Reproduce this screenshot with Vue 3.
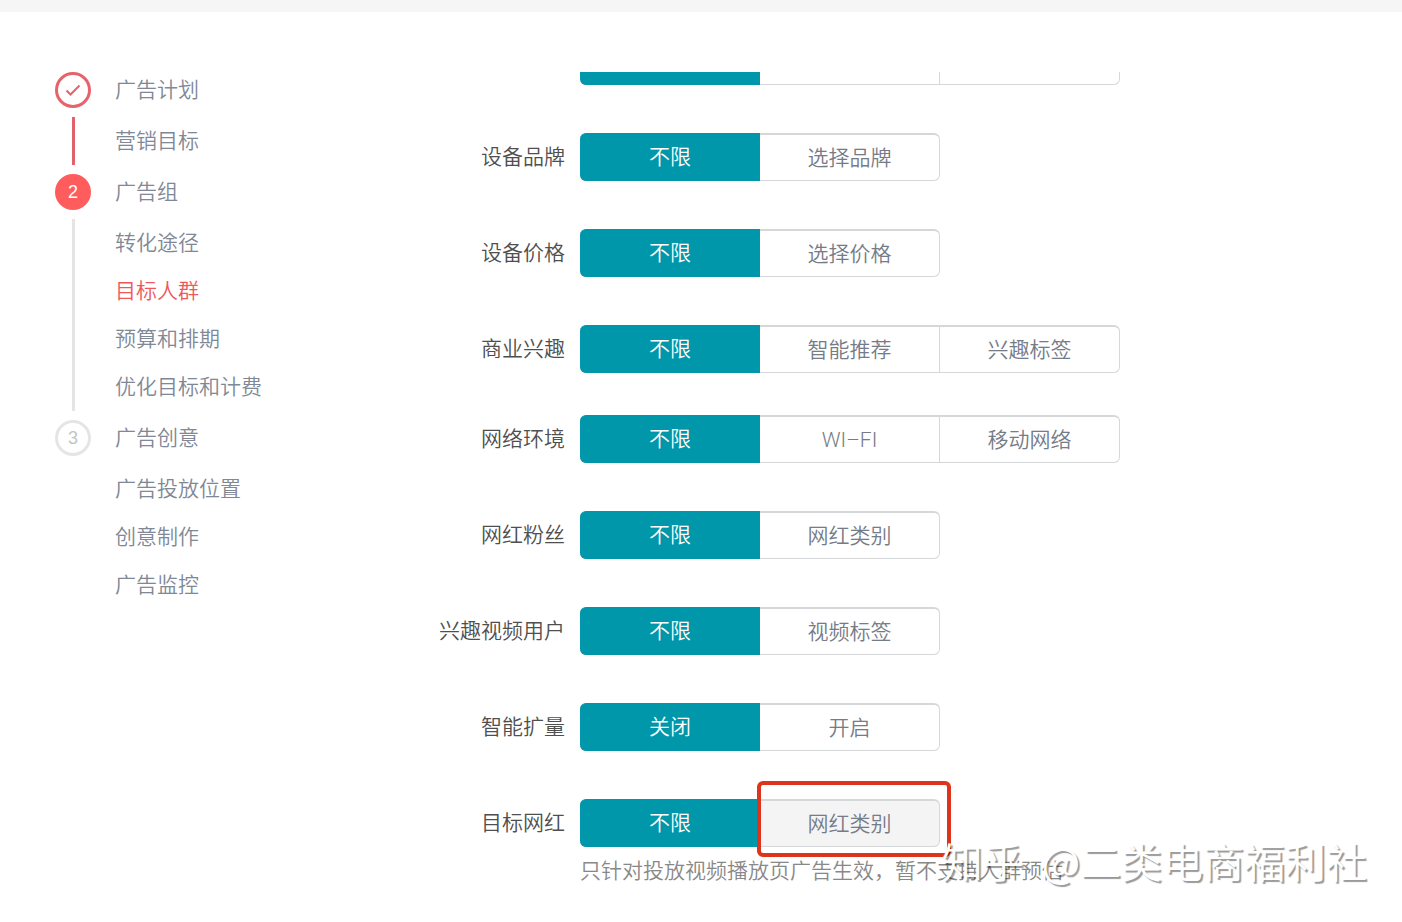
<script setup>
import { ref } from 'vue'

const steps = [
  { mark: 'done', title: '广告计划', items: ['营销目标'] },
  { mark: 'current', number: 2, title: '广告组', items: ['转化途径', '目标人群', '预算和排期', '优化目标和计费'] },
  { mark: 'todo', number: 3, title: '广告创意', items: ['广告投放位置', '创意制作', '广告监控'] }
]
const activeItem = '目标人群'

const rows = ref([
  { label: '设备品牌', options: ['不限', '选择品牌'], value: 0 },
  { label: '设备价格', options: ['不限', '选择价格'], value: 0 },
  { label: '商业兴趣', options: ['不限', '智能推荐', '兴趣标签'], value: 0, tight: true },
  { label: '网络环境', options: ['不限', 'WI–FI', '移动网络'], value: 0 },
  { label: '网红粉丝', options: ['不限', '网红类别'], value: 0 },
  { label: '兴趣视频用户', options: ['不限', '视频标签'], value: 0 },
  { label: '智能扩量', options: ['关闭', '开启'], value: 0 },
  {
    label: '目标网红',
    options: ['不限', '网红类别'],
    value: 0,
    marked: 1,
    hint: '只针对投放视频播放页广告生效，暂不支持人群预估'
  }
])
</script>

<template>
  <div class="page">
    <div class="topbar"></div>
    <div class="layout">
      <nav class="steps">
        <section v-for="step in steps" :key="step.title" :class="['step', step.mark]">
          <a href="#" class="step-head">
            <span class="badge">
              <svg v-if="step.mark === 'done'" viewBox="0 0 36 36" width="36" height="36" aria-hidden="true">
                <path d="M11.5 18.5 L15.5 22.5 L24.5 13.5" fill="none" stroke="currentColor" stroke-width="2" />
              </svg>
              <template v-else>{{ step.number }}</template>
            </span>
            <span>{{ step.title }}</span>
          </a>
          <div class="step-body">
            <a
              v-for="item in step.items"
              :key="item"
              href="#"
              :class="['step-item', { active: item === activeItem }]"
            >{{ item }}</a>
          </div>
        </section>
      </nav>

      <main class="form">
        <div class="row scrolled" aria-hidden="true">
          <div class="segments">
            <span class="segment on"></span>
            <span class="segment"></span>
            <span class="segment"></span>
          </div>
        </div>
        <div v-for="(row, r) in rows" :key="row.label" :class="['row', { tight: row.tight }]">
          <span :id="'label-' + r" class="label">{{ row.label }}</span>
          <div class="segments" role="group" :aria-labelledby="'label-' + r">
            <button
              v-for="(option, i) in row.options"
              :key="option"
              type="button"
              :class="['segment', { on: row.value === i, marked: row.marked === i }]"
              :aria-pressed="row.value === i"
              @click="row.value = i"
            >{{ option }}</button>
          </div>
          <p v-if="row.hint" class="hint">{{ row.hint }}</p>
        </div>
      </main>
    </div>
    <div class="watermark"><span>知乎</span><span>@二类电商福利社</span></div>
  </div>
</template>

<style>
body {
  background: #fff;
}
</style>

<style scoped>
.page {
  position: relative;
  min-height: 100vh;
  overflow: hidden;
  font-family: Roboto, "Noto Sans CJK SC", sans-serif;
  font-size: 21px;
  font-weight: 350;
  line-height: 30px;
}

.topbar {
  height: 12px;
  background: #f6f6f6;
}

.layout {
  display: grid;
  grid-template-columns: 300px 1fr;
  padding: 60px 24px 0 55px;
}

.step-head {
  display: flex;
  align-items: center;
  gap: 24px;
  height: 36px;
  color: #808896;
  text-decoration: none;
}

.badge {
  box-sizing: border-box;
  display: flex;
  align-items: center;
  justify-content: center;
  width: 36px;
  height: 36px;
  border-radius: 50%;
  font-family: "Liberation Sans", sans-serif;
  font-size: 18px;
}

.badge svg {
  flex: none;
}

.done .badge {
  border: 3px solid #e8626a;
  color: #e8626a;
}

.current .badge {
  background: #ff5c5e;
  color: #fff;
}

.todo .badge {
  border: 3px solid #e5e5e5;
  color: #c4c4c4;
}

.step-body {
  display: flex;
  flex-direction: column;
  margin: 9px 0 9px 17px;
  padding-left: 40px;
  border-left: 3px solid transparent;
}

.done .step-body {
  border-left-color: #e0626a;
}

.current .step-body {
  border-left-color: #e4e4e4;
}

.step-item {
  height: 48px;
  line-height: 48px;
  color: #808896;
  text-decoration: none;
}

.step-item.active {
  color: #ee585c;
}

.form {
  overflow: hidden;
}

.row {
  display: grid;
  grid-template-columns: 210px 1fr;
  column-gap: 15px;
  align-items: center;
  margin-bottom: 48px;
}

.row.tight {
  margin-bottom: 42px;
}

.row.scrolled {
  margin-top: -35px;
}

.label {
  color: #4f4f4f;
  text-align: right;
}

.segments {
  grid-column: 2;
  display: flex;
}

.segment {
  position: relative;
  box-sizing: border-box;
  width: 180px;
  height: 48px;
  margin: 0;
  padding: 0;
  border: solid #d6d7d9;
  border-width: 2px 1px 1px 0;
  background: #fff;
  color: #757b87;
  font: inherit;
  cursor: pointer;
}

.segment:first-child {
  border-radius: 6px 0 0 6px;
}

.segment:last-child {
  border-radius: 0 6px 6px 0;
}

.segment.on {
  border-width: 1px 0;
  border-color: #0097ab;
  background: #0097ab;
  color: #fff;
}

.segment.marked {
  background: #f4f4f5;
}

.segment.marked::after {
  content: "";
  position: absolute;
  inset: -20px -12px -11px -3px;
  border: 4px solid #dd341b;
  border-radius: 6px;
}

.hint {
  grid-column: 2;
  margin: 9px 0 0;
  color: #888;
}

.watermark {
  position: absolute;
  right: 35px;
  bottom: 44px;
  display: flex;
  gap: 18px;
  color: #fff;
  font-family: "Noto Sans CJK SC", sans-serif;
  font-size: 41px;
  font-weight: 350;
  line-height: 60px;
  text-shadow: 2px 2px 1px rgba(0, 0, 0, 0.4);
  white-space: nowrap;
  pointer-events: none;
}
</style>
